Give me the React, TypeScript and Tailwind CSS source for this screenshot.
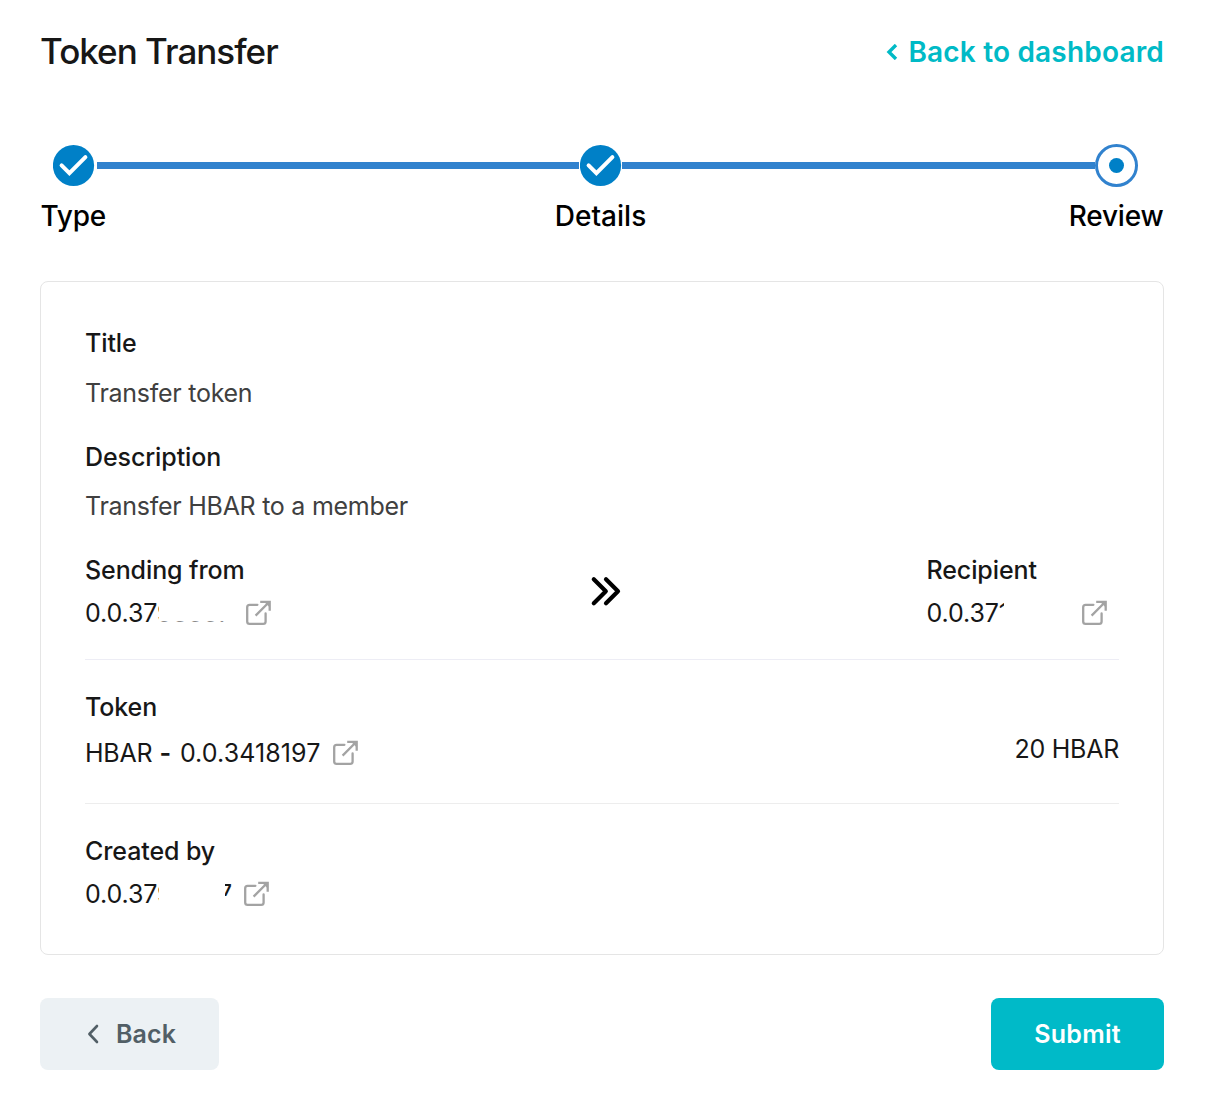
import type { ReactNode } from "react";

function ExternalLink() {
  return (
    <svg className="h-[26px] w-[26px] shrink-0" viewBox="0 0 26 26" fill="none" stroke="#a3a3a3" strokeWidth="2.3">
      <path d="M12.4 4.8H4.6A2.4 2.4 0 0 0 2.2 7.2V21.4A2.4 2.4 0 0 0 4.6 23.8H18.2A2.4 2.4 0 0 0 20.6 21.4V13.4" strokeLinecap="round" />
      <path d="M10.6 15.6L24.4 1.8M15.2 1.9H24.7V10.8" />
      <path d="M19 1.8H24.6V7.3Z" fill="#a3a3a3" stroke="none" />
    </svg>
  );
}

function CheckCircle() {
  return (
    <svg className="h-[43px] w-[42px] shrink-0" viewBox="0 0 42 43" fill="none">
      <circle cx="20.5" cy="21.5" r="20.6" fill="#0080c7" />
      <path d="M8.6 21.4L16.4 29.1L32.4 13.1" stroke="#fff" strokeWidth="4" strokeLinecap="round" strokeLinejoin="miter" />
    </svg>
  );
}

function Label({ children }: { children: ReactNode }) {
  return <div className="font-medium tracking-[-0.1px]">{children}</div>;
}

export default function App() {
  return (
    <div className="h-[1116px] w-[1214px] overflow-hidden bg-white pr-[50px] pl-10 font-['Inter',sans-serif] text-[#171717]">
      <header className="flex h-[104px] items-center justify-between">
        <h1 className="pb-0.5 text-[35px] leading-[40px] font-medium tracking-[-0.98px]">Token Transfer</h1>
        <a className="flex items-center gap-[10px] text-[28px] leading-8 font-semibold tracking-[0.18px] text-[#00bac6]">
          <svg className="h-4 w-3" viewBox="0 0 12 16" fill="none" stroke="currentColor" strokeWidth="3.4">
            <path d="M10 1L3 8L10 15" />
          </svg>
          Back to dashboard
        </a>
      </header>

      <div className="mt-10 flex h-[43px] items-center pr-[26px] pl-[12.5px]">
        <CheckCircle />
        <div className="ml-[2.5px] h-[7px] w-[482px] bg-[#3182ce]" />
        <div className="ml-[0.5px] flex">
          <CheckCircle />
        </div>
        <div className="ml-[0.5px] h-[7px] flex-1 bg-[#3182ce]" />
        <div className="flex h-[43px] w-[43px] items-center justify-center rounded-full border-[3px] border-[#3182ce] bg-white">
          <div className="h-[15px] w-[15px] rounded-full bg-[#0080c7]" />
        </div>
      </div>
      <div className="mt-[13px] grid grid-cols-[515px_91px_1fr] text-[28px] leading-8 font-medium text-black">
        <span className="pl-[0.5px] tracking-[-0.2px]">Type</span>
        <span className="flex justify-center whitespace-nowrap">Details</span>
        <span className="pr-[0.5px] text-right tracking-[-0.2px]">Review</span>
      </div>

      <main className="mt-[49px] h-[674px] rounded-lg border border-[#e5e5e5] px-11 pt-[49px] text-[25px] leading-6 tracking-[-0.1px]">
        <Label>Title</Label>
        <p className="mt-[26px] tracking-[-0.27px] text-[#404040]">Transfer token</p>
        <div className="mt-10">
          <Label>Description</Label>
        </div>
        <p className="mt-[25px] tracking-[-0.27px] text-[#404040]">Transfer HBAR to a member</p>

        <section className="mt-10 flex h-[102px] justify-between border-b border-[#ededf5]">
          <div className="w-[200px]">
            <Label>Sending from</Label>
            <div className="mt-[18px] flex h-[26px] items-center">
              <div className="relative w-[159.5px]">
                0.0.3793557
                <span className="absolute top-0 left-[74px] h-[20px] w-20 bg-white" />
                <span className="absolute top-[20px] left-[76px] h-px w-20 bg-white/50" />
              </div>
              <ExternalLink />
            </div>
          </div>
          <svg className="mt-[18px] h-8 w-8" viewBox="0 0 32 32" fill="none" stroke="#000" strokeWidth="4.2" strokeLinecap="round" strokeLinejoin="round">
            <path d="M3.8 3.3L15.8 15.3L3.8 27.3M16 3.3L28 15.3L16 27.3" />
          </svg>
          <div className="w-[192.5px]">
            <Label>Recipient</Label>
            <div className="mt-[18px] flex h-[26px] items-center">
              <div className="relative w-[154px]">
                0.0.371
                <span className="absolute top-[7px] left-[71px] h-5 w-5 bg-white" />
                <span className="absolute top-0 left-[77px] h-5 w-5 bg-white" />
              </div>
              <ExternalLink />
            </div>
          </div>
        </section>

        <section className="flex h-[144px] justify-between border-b border-[#ededed] pt-[35px]">
          <div>
            <Label>Token</Label>
            <div className="mt-[21px] flex h-[26px] items-center gap-[12px]">
              <span className="tracking-[0.1px]">
                <span className="tracking-[-0.25px]">HBAR</span> <span className="mr-[1.6px] font-semibold">-</span> 0.0.3418197
              </span>
              <ExternalLink />
            </div>
          </div>
          <span className="mt-[42px] tracking-[-0.25px]">20 HBAR</span>
        </section>

        <section className="pt-[35px]">
          <Label>Created by</Label>
          <div className="mt-[18px] flex h-[26px] items-center">
            <div className="relative w-[157.5px]">
              0.0.3793557
              <span className="absolute top-0 left-[74px] h-6 w-[66px] bg-white" />
              <span className="absolute top-[14px] left-[130px] h-3 w-5 bg-white" />
            </div>
            <ExternalLink />
          </div>
        </section>
      </main>

      <footer className="mt-[43px] flex justify-between text-[25px] font-semibold">
        <button className="flex h-[72px] w-[179px] items-center rounded-lg bg-[#ecf1f4] pl-[47px] tracking-[0.1px] text-[#525f66]">
          <svg className="mr-[17px] h-5 w-3" viewBox="0 0 12 20" fill="none" stroke="currentColor" strokeWidth="2.6" strokeLinecap="round" strokeLinejoin="round">
            <path d="M10 2L2.4 10L10 18" />
          </svg>
          <span className="pt-0.5">Back</span>
        </button>
        <button className="h-[72px] w-[173px] rounded-lg bg-[#00bac8] pt-0.5 tracking-[0.25px] text-white">Submit</button>
      </footer>
    </div>
  );
}
